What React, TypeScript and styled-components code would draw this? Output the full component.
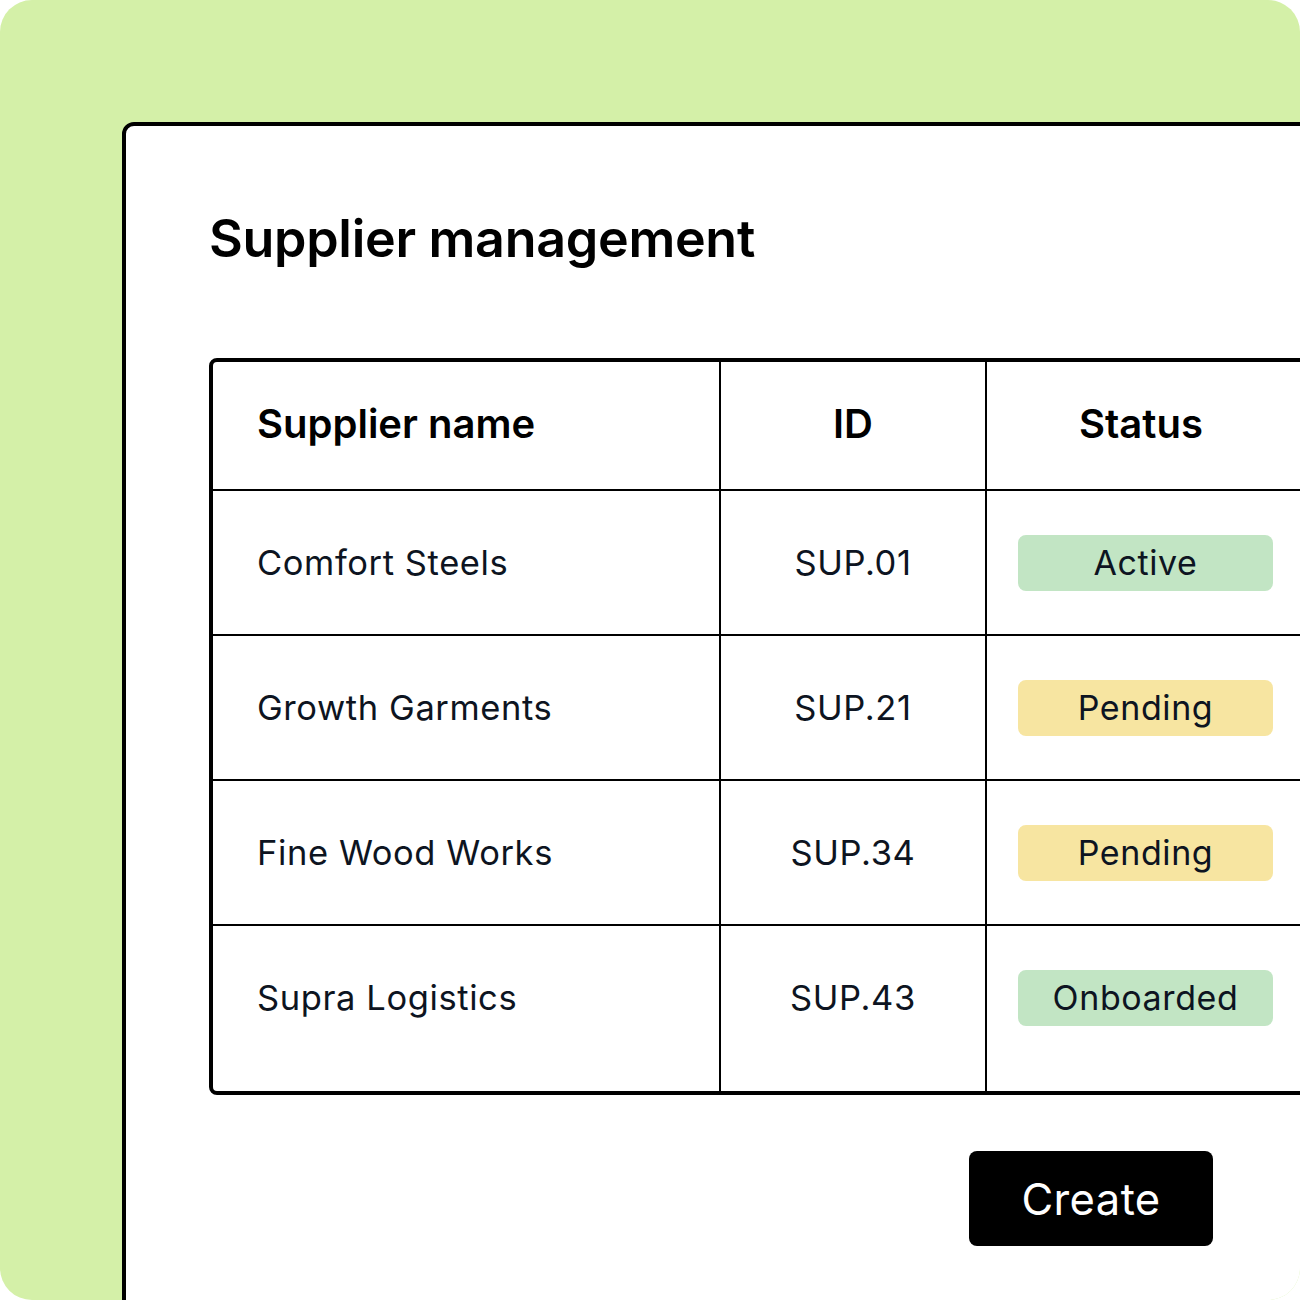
import React from "react";
import styled, { createGlobalStyle } from "styled-components";

const Global = createGlobalStyle`
  html, body { margin: 0; padding: 0; background: #ffffff; }
  body { font-family: Inter, "Noto Sans", "Liberation Sans", sans-serif; }
  * { box-sizing: border-box; }
`;

const Frame = styled.div`
  width: 1300px;
  height: 1300px;
  background: #d4f0a8;
  border-radius: 32px;
  overflow: hidden;
  padding: 122px 0 0 122px;
`;

const Panel = styled.div`
  width: 1400px;
  height: 1400px;
  background: #ffffff;
  border: 4px solid #000000;
  border-radius: 12px;
  padding: 84px 0 0 83px;
  display: flex;
  flex-direction: column;
`;

const Title = styled.h1`
  margin: 0;
  font-size: 52px;
  line-height: 58px;
  font-weight: 600;
  color: #000000;
  letter-spacing: -0.3px;
`;

const Table = styled.div`
  margin-top: 90px;
  width: 1120px;
  border: 4px solid #000000;
  border-radius: 8px;
  display: grid;
  grid-template-columns: 508px 266px 1fr;
`;

const Cell = styled.div<{ $align?: "left" | "center"; $lastCol?: boolean; $lastRow?: boolean; $head?: boolean }>`
  height: ${(p) => (p.$head ? "129px" : p.$lastRow ? "165px" : "145px")};
  padding-bottom: ${(p) => (p.$lastRow ? "22px" : p.$head ? "4px" : "0")};
  border-right: ${(p) => (p.$lastCol ? "none" : "2px solid #000000")};
  border-bottom: ${(p) => (p.$lastRow ? "none" : "2px solid #000000")};
  display: flex;
  align-items: center;
  justify-content: ${(p) => (p.$align === "center" ? "center" : "flex-start")};
  padding-left: ${(p) => (p.$align === "center" ? "0" : "44px")};
`;

const StatusCell = styled(Cell)`
  justify-content: flex-start;
  padding-left: 31px;
`;

const StatusHead = styled(Cell)`
  justify-content: flex-start;
  padding-left: 92px;
`;

const HeadText = styled.span`
  font-size: 40px;
  font-weight: 600;
  color: #000000;
`;

const BodyText = styled.span`
  font-size: 34.5px;
  font-weight: 400;
  color: #0d1421;
  letter-spacing: 0.6px;
`;

const Badge = styled.span<{ $tone: "green" | "yellow" }>`
  width: 255px;
  height: 56px;
  border-radius: 8px;
  background: ${(p) => (p.$tone === "green" ? "#c2e5c4" : "#f7e5a1")};
  display: flex;
  align-items: center;
  justify-content: center;
  font-size: 34px;
  font-weight: 400;
  color: #0d1421;
  letter-spacing: 0.6px;
`;

const Footer = styled.div`
  margin-top: 56px;
  width: 1004px;
  display: flex;
  justify-content: flex-end;
`;

const CreateButton = styled.button`
  width: 244px;
  height: 95px;
  border: none;
  border-radius: 8px;
  background: #000000;
  color: #ffffff;
  font-family: Inter, "Noto Sans", "Liberation Sans", sans-serif;
  font-size: 43.5px;
  font-weight: 400;
  letter-spacing: 0.4px;
  cursor: pointer;
`;

type Row = { name: string; id: string; status: string; tone: "green" | "yellow" };

const rows: Row[] = [
  { name: "Comfort Steels", id: "SUP.01", status: "Active", tone: "green" },
  { name: "Growth Garments", id: "SUP.21", status: "Pending", tone: "yellow" },
  { name: "Fine Wood Works", id: "SUP.34", status: "Pending", tone: "yellow" },
  { name: "Supra Logistics", id: "SUP.43", status: "Onboarded", tone: "green" },
];

export default function App() {
  return (
    <>
      <Global />
      <Frame>
        <Panel>
          <Title>Supplier management</Title>
          <Table>
            <Cell $head>
              <HeadText>Supplier name</HeadText>
            </Cell>
            <Cell $head $align="center">
              <HeadText>ID</HeadText>
            </Cell>
            <StatusHead $head $lastCol>
              <HeadText>Status</HeadText>
            </StatusHead>
            {rows.map((r, i) => {
              const last = i === rows.length - 1;
              return (
                <React.Fragment key={r.id}>
                  <Cell $lastRow={last}>
                    <BodyText>{r.name}</BodyText>
                  </Cell>
                  <Cell $lastRow={last} $align="center">
                    <BodyText>{r.id}</BodyText>
                  </Cell>
                  <StatusCell $lastRow={last} $lastCol>
                    <Badge $tone={r.tone}>{r.status}</Badge>
                  </StatusCell>
                </React.Fragment>
              );
            })}
          </Table>
          <Footer>
            <CreateButton>Create</CreateButton>
          </Footer>
        </Panel>
      </Frame>
    </>
  );
}
